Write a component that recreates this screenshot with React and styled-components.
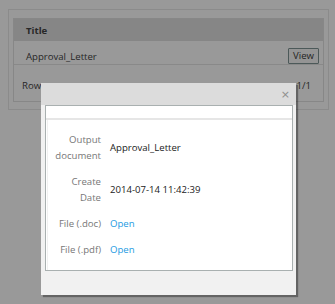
import React from "react";
import styled, { createGlobalStyle } from "styled-components";

const Global = createGlobalStyle`
  html, body { margin: 0; padding: 0; background: #ffffff; }
  body { padding: 8px 0 0 8px; font-family: "Open Sans", "Liberation Sans", sans-serif; font-size: 9.6px; }
  * { box-sizing: border-box; }
`;

const Panel = styled.div`
  width: 321px;
  border: 1px solid #e8e8e8;
  margin-top: 1px;
  padding: 8px 4px 7px 4px;
  background: #ffffff;
`;

const Grid = styled.div`
  border: 1px solid #e2e2e2;
  color: #444;
`;

const GridHead = styled.div`
  height: 22px;
  display: flex;
  align-items: center;
  padding-left: 12px;
  background: #e0e0e0;
  font-weight: 700;
`;

const GridRow = styled.div`
  display: flex;
  align-items: center;
  justify-content: space-between;
  padding: 7px 4px 0 12px;
  height: 24px;
  border-bottom: 1px solid #e4e4e4;
`;

const ViewButton = styled.button`
  height: 16px;
  padding: 0 4px;
  font: inherit;
  line-height: 12px;
  color: #3c3c3c;
  background: #f7f7f7;
  border: 1px solid #7f9595;
  border-radius: 1px;
`;

const Pager = styled.div`
  height: 36px;
  display: flex;
  align-items: center;
  justify-content: space-between;
  padding: 4px 12px 0 8px;
`;

const Overlay = styled.div`
  position: fixed;
  inset: 0;
  background: rgba(0, 0, 0, 0.4);
`;

const Modal = styled.div`
  position: fixed;
  left: 41px;
  top: 83px;
  width: 255px;
  height: 212px;
  background: #f1f1f1;
  box-shadow: 2px 2px 1px rgba(0, 0, 0, 0.35);
  display: flex;
  flex-direction: column;
`;

const ModalHeader = styled.div`
  height: 22px;
  background: #dcdcdc;
  display: flex;
  align-items: center;
  justify-content: flex-end;
  padding-right: 6px;
`;

const Close = styled.span`
  color: #8e8e8e;
  font-size: 11px;
  line-height: 1;
  font-family: "DejaVu Sans", sans-serif;
`;

const ModalBody = styled.div`
  padding: 0 3px 0 4px;
`;

const Box = styled.div`
  border: 1px solid #a9b0b0;
  background: #ffffff;
  height: 166px;
`;

const BoxTop = styled.div`
  height: 14px;
  border-bottom: 2px solid #e6e6e6;
`;

const Details = styled.div`
  padding: 7px 0;
  border-left: 1px solid #f0f0f0;
  margin-left: 1px;
`;

const DetailRow = styled.div`
  display: grid;
  grid-template-columns: 53px 1fr;
  column-gap: 9px;
  align-items: center;
  padding: 5px 0;
  line-height: 16px;
`;

const Label = styled.div`
  text-align: right;
  color: #777777;
`;

const Value = styled.div`
  color: #222222;
`;

const Link = styled.a`
  color: #1e9be2;
  text-decoration: none;
  cursor: pointer;
`;

export default function App() {
  return (
    <>
      <Global />
      <Panel>
        <Grid>
          <GridHead>Title</GridHead>
          <GridRow>
            <span>Approval_Letter</span>
            <ViewButton>View</ViewButton>
          </GridRow>
          <Pager>
            <span>Rows</span>
            <span>1/1</span>
          </Pager>
        </Grid>
      </Panel>
      <Overlay />
      <Modal>
        <ModalHeader>
          <Close>×</Close>
        </ModalHeader>
        <ModalBody>
          <Box>
            <BoxTop />
            <Details>
              <DetailRow>
                <Label>Output<br />document</Label>
                <Value>Approval_Letter</Value>
              </DetailRow>
              <DetailRow>
                <Label>Create<br />Date</Label>
                <Value>2014-07-14 11:42:39</Value>
              </DetailRow>
              <DetailRow>
                <Label>File (.doc)</Label>
                <Value><Link>Open</Link></Value>
              </DetailRow>
              <DetailRow>
                <Label>File (.pdf)</Label>
                <Value><Link>Open</Link></Value>
              </DetailRow>
            </Details>
          </Box>
        </ModalBody>
      </Modal>
    </>
  );
}
